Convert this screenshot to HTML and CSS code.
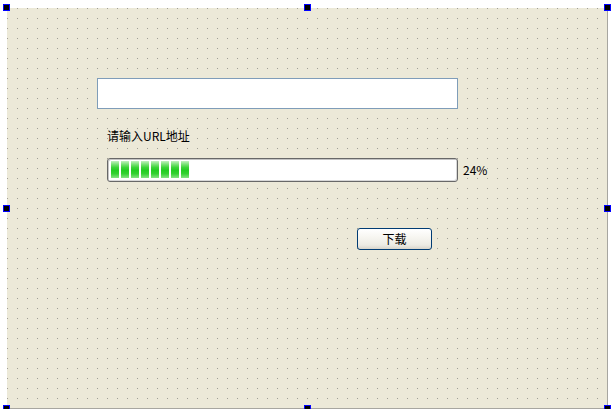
FILE: index.html
```html
<!DOCTYPE html>
<html lang="zh-CN">
<head>
<meta charset="utf-8">
<title>Dialog</title>
<link rel="stylesheet" href="styles.css">
</head>
<body>
<div class="stage">
  <div class="dialog">
    <div class="edit"></div>
    <div class="label">请输入URL地址</div>
    <div class="progress-row">
      <div class="progress">
        <span class="chunk"></span><span class="chunk"></span><span class="chunk"></span><span class="chunk"></span><span class="chunk"></span><span class="chunk"></span><span class="chunk"></span><span class="chunk"></span>
      </div>
      <span class="percent">24%</span>
    </div>
    <div class="btn-row">
      <div class="button">下载</div>
    </div>
    <span class="handle h-tl"></span>
    <span class="handle h-tm"></span>
    <span class="handle h-tr"></span>
    <span class="handle h-ml"></span>
    <span class="handle h-mr"></span>
    <span class="handle h-bl"></span>
    <span class="handle h-bm"></span>
    <span class="handle h-br"></span>
  </div>
</div>
</body>
</html>
```

FILE: styles.css
```css
html, body {
  margin: 0;
  padding: 0;
  background: #ffffff;
}
body {
  font-family: "Noto Sans CJK SC", "Liberation Sans", sans-serif;
  font-size: 12px;
  color: #000;
}
.stage {
  padding: 8px 0 0 7px;
}
.dialog {
  position: relative;
  box-sizing: border-box;
  width: 601px;
  height: 401px;
  padding-top: 70px;
  background-color: #ece9d8;
  background-image: conic-gradient(from 270deg at 1px 1px, #a09e96 90deg, transparent 0);
  background-size: 10px 10px;
  background-position: 0 0;
  border-right: 1px solid #a7a6a0;
  border-bottom: 1px solid #a7a6a0;
  display: flex;
  flex-direction: column;
  align-items: flex-start;
}
.edit {
  box-sizing: border-box;
  margin-left: 90px;
  width: 361px;
  height: 31px;
  background: #ffffff;
  border: 1px solid #7f9db9;
}
.label {
  margin: 20px 0 0 100px;
  line-height: 14px;
  height: 14px;
  white-space: nowrap;
}
.progress-row {
  margin: 15px 0 0 100px;
  display: flex;
  align-items: center;
  gap: 5px;
}
.progress {
  box-sizing: border-box;
  width: 351px;
  height: 24px;
  padding: 2px 3px 3px 3px;
  border: 1px solid #686868;
  border-radius: 3px;
  background: #ffffff;
  box-shadow: inset 1px 1px 0 #c4c4c4, inset -1px -1px 0 #d8d8d8;
  display: flex;
  gap: 2px;
}
.chunk {
  width: 8px;
  height: 17px;
  background: linear-gradient(#c2f1c0 0%, #7fe27c 18%, #3bd338 38%, #22cc22 55%, #33d131 75%, #84e381 100%);
}
.percent {
  line-height: 14px;
  margin-top: -1px;
}
.btn-row {
  margin: 46px 0 0 350px;
}
.button {
  box-sizing: border-box;
  width: 75px;
  height: 22px;
  border: 1px solid #003c74;
  border-radius: 3px;
  background: linear-gradient(#ffffff 0%, #f7f6f1 40%, #ecebe4 80%, #d8d5cb 100%);
  text-align: center;
  line-height: 20px;
  font-size: 12px;
}
.handle {
  position: absolute;
  width: 7px;
  height: 7px;
  box-sizing: border-box;
  border: 1px solid #0000ff;
  background: #000000;
}
.h-tl { left: -4px; top: -4px; }
.h-tm { left: 297px; top: -4px; }
.h-tr { left: 597px; top: -4px; }
.h-ml { left: -4px; top: 197px; }
.h-mr { left: 597px; top: 197px; }
.h-bl { left: -4px; top: 397px; }
.h-bm { left: 297px; top: 397px; }
.h-br { left: 597px; top: 397px; }
```
